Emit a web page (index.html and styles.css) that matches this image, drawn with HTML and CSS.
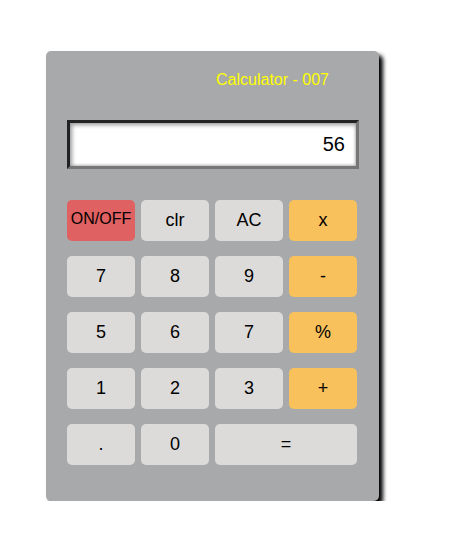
FILE: index.html
```html
<!DOCTYPE html>
<html>
<head>
<meta charset="utf-8">
<link rel="stylesheet" href="styles.css">
</head>
<body>
<div class="calc">
  <div class="title">Calculator - 007</div>
  <div class="display">56</div>
  <div class="keys">
    <button class="key red">ON/OFF</button>
    <button class="key">clr</button>
    <button class="key">AC</button>
    <button class="key op">x</button>
    <button class="key">7</button>
    <button class="key">8</button>
    <button class="key">9</button>
    <button class="key op">-</button>
    <button class="key">5</button>
    <button class="key">6</button>
    <button class="key">7</button>
    <button class="key op">%</button>
    <button class="key">1</button>
    <button class="key">2</button>
    <button class="key">3</button>
    <button class="key op">+</button>
    <button class="key">.</button>
    <button class="key">0</button>
    <button class="key wide">=</button>
  </div>
</div>
</body>
</html>
```
FILE: styles.css
```css
html, body {
  margin: 0;
  padding: 0;
  background: #ffffff;
  font-family: "Liberation Sans", Arial, sans-serif;
}
body {
  padding: 51px 0 0 46px;
}
.calc {
  box-sizing: border-box;
  width: 333px;
  height: 450px;
  background: #a8a9aa;
  border-radius: 5px;
  box-shadow: 4px 4px 4px #000000;
  padding: 0 20px 0 21px;
}
.title {
  color: #ffff00;
  font-size: 16px;
  line-height: 18px;
  padding-top: 20px;
  text-align: right;
  padding-right: 30px;
}
.display {
  box-sizing: border-box;
  margin-top: 31px;
  height: 49px;
  background: #ffffff;
  border: 3px solid;
  border-color: #222222 #767676 #767676 #222222;
  box-shadow: inset 2px 2px 4px #9a9a9a, inset -1px -1px 3px #bdbdbd;
  font-size: 20px;
  line-height: 43px;
  text-align: right;
  padding-right: 11px;
  color: #000000;
}
.keys {
  display: grid;
  grid-template-columns: repeat(4, 68px);
  grid-auto-rows: 41px;
  column-gap: 6px;
  row-gap: 15px;
  margin-top: 31px;
}
.key {
  border: none;
  border-radius: 5px;
  background: #dcdbda;
  font-family: "Liberation Sans", Arial, sans-serif;
  font-size: 18px;
  color: #000000;
  padding: 0;
  margin: 0;
}
.key.red {
  background: #e06161;
  font-size: 16px;
  padding-bottom: 3px;
}
.key.op {
  background: #f8c15c;
}
.key.wide {
  grid-column: span 2;
}
```
